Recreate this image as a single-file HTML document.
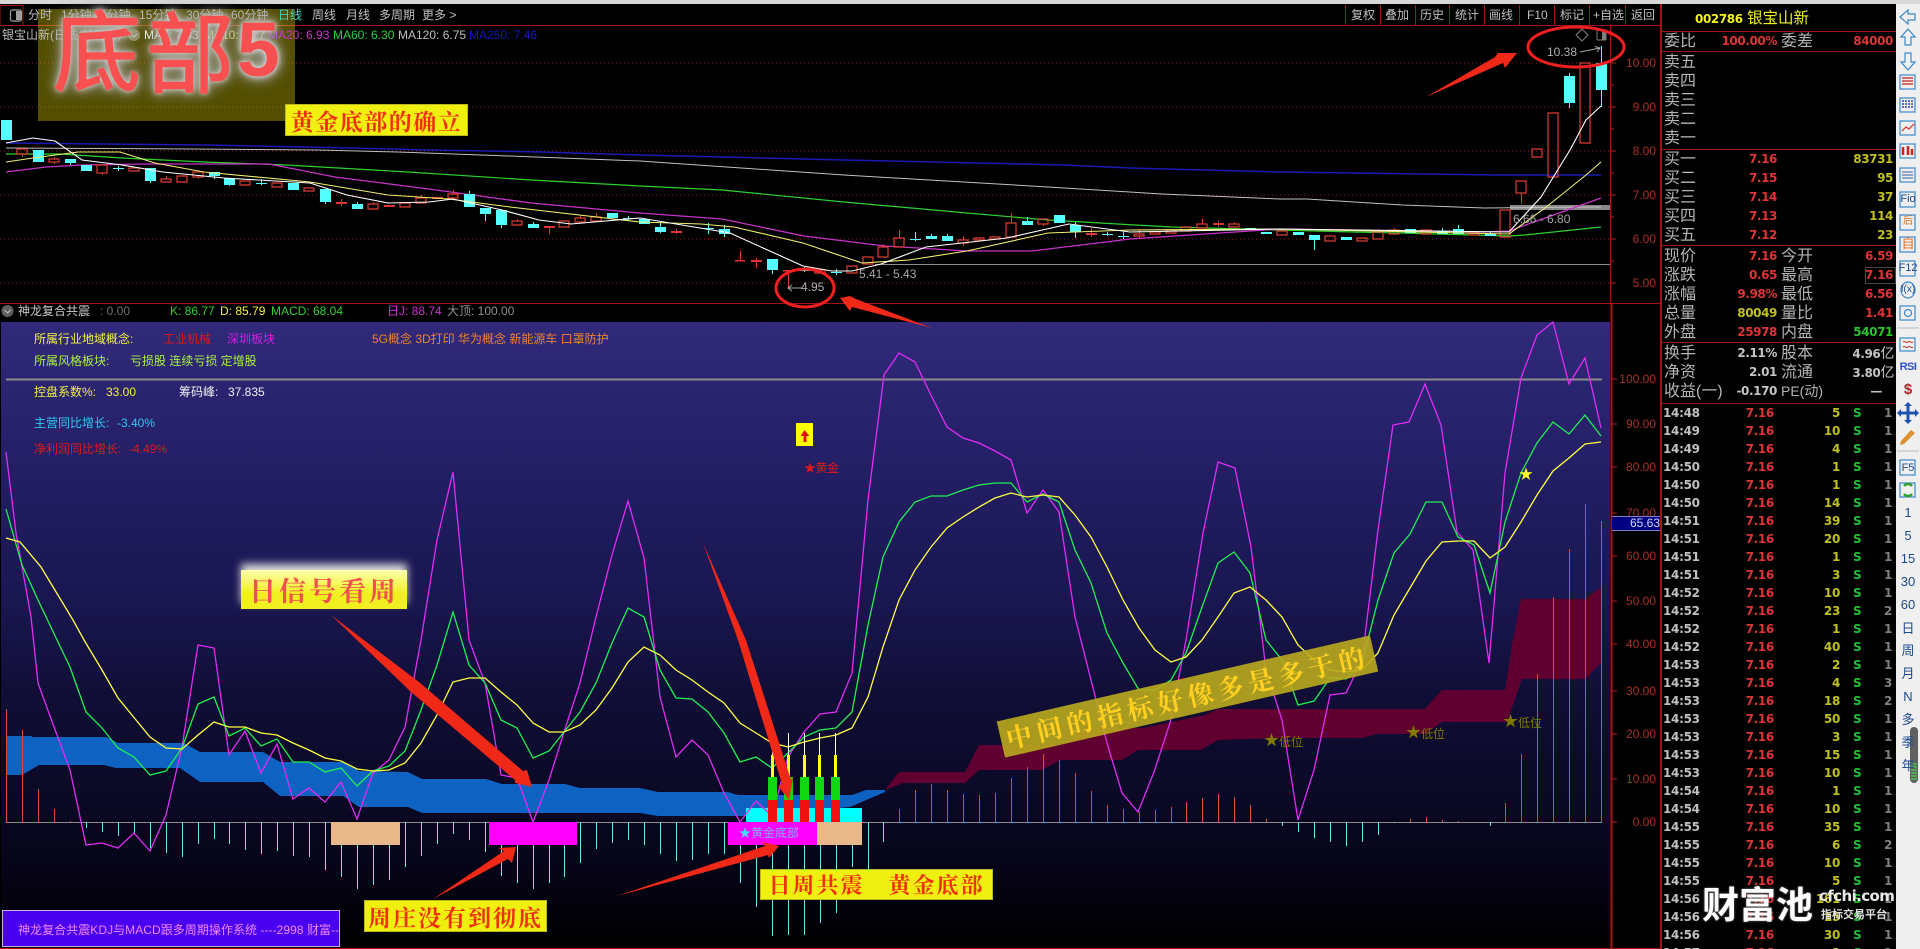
<!DOCTYPE html>
<html><head><meta charset="utf-8"><style>
html,body{margin:0;padding:0;background:#000;}
#p{position:relative;width:1920px;height:949px;overflow:hidden;background:#000;font-family:"Liberation Sans","Noto Sans CJK SC",sans-serif;font-size:12px;color:#c0c0c0;}
#p div,#p span{white-space:nowrap;}
.t{position:absolute;line-height:14px;height:14px;}
.box{position:absolute;}
.lab{position:absolute;display:flex;align-items:center;justify-content:center;background:#f0f010;color:#f03010;font-family:"Noto Serif CJK SC",serif;font-weight:700;box-sizing:border-box;border:1px solid #b8b820;}
svg{position:absolute;left:0;top:0;}
#rp{position:absolute;left:1662px;top:0;width:234px;height:949px;}
.r{position:absolute;left:0;width:234px;height:19px;line-height:19px;font-family:"DejaVu Sans",sans-serif;font-weight:700;font-size:12px;letter-spacing:-.4px;}
.r i{font-style:normal;position:absolute;top:0;}
.a,.c{font-family:"Liberation Sans","Noto Sans CJK SC",sans-serif;font-weight:400;font-size:16px;letter-spacing:0;color:#b4b4b4;}
.a{left:2px}.c{left:119px}.b{right:119px}.d{right:3px}
.R{color:#e03434}.Y{color:#c0c020}.G{color:#28c428}.W{color:#c4c4c4}
.k{position:absolute;left:0;width:234px;height:18px;line-height:18px;font-family:"DejaVu Sans",sans-serif;font-weight:700;font-size:12px;letter-spacing:-.3px;}
.k i{font-style:normal;position:absolute;top:0;}
.k .m{left:1px;color:#c0c0c0;}.k .n{right:122px;color:#e03434;}.k .o{right:56px;color:#c0c020;}.k .s{left:191px;color:#20c030;}.k .u{left:222px;color:#808080;}
.ax{position:absolute;left:1612px;width:44px;text-align:right;color:#a83028;font-size:12px;line-height:14px;height:14px;}
.sb{position:absolute;left:1896px;width:24px;text-align:center;color:#1d4a8c;font-size:13px;line-height:16px;height:16px;}
</style></head><body><div id="p">

<!-- indicator background -->
<div class="box" style="left:1px;top:322px;width:1609px;height:626px;background:linear-gradient(to bottom,#312a7a 0,#241f66 22%,#191650 45%,#100e36 60%,#0b0926 75%,#060416 88%,#000 100%);"></div>

<svg width="1920" height="949" viewBox="0 0 1920 949">
<!-- top grid -->
<path d="M0 63H1610M0 107H1610M0 151H1610M0 195H1610M0 239H1610M0 283H1610" stroke="#8a2018" stroke-width="1" stroke-dasharray="1 3" fill="none"/>
<path d="M875 264.500H1610" stroke="#8c8c8c" stroke-width="1"/>
<rect x="1510" y="205" width="100" height="5" fill="#8a8a8a"/>

<!-- MA lines -->
<polyline fill="none" stroke="#1a1ab4" stroke-width="1.500" points="6,143 208,145 351,148 429,150 541,152 640,155 844,160 1064,165 1130,168 1280,172 1353,173 1496,175 1601,175"/>
<polyline fill="none" stroke="#c0c0c0" stroke-width="1" points="6,148 192,149 318,150 398,152 510,156 640,161 844,175 1048,187 1162,194 1280,199 1307,199 1402,205 1484,208 1601,207"/>
<polyline fill="none" stroke="#2ed12e" stroke-width="1.200" points="6,154 61,154 122,158 204,162 286,165 408,172 531,180 640,186 722,190 844,202 967,213 1048,220 1171,227 1280,230 1353,232 1402,233 1509,236 1525,235 1601,227"/>
<polyline fill="none" stroke="#c832c8" stroke-width="1.300" points="6,172 46,167 82,165 143,164 269,164 335,177 429,189 531,203 640,213 722,219 804,236 885,246 967,251 1032,251 1130,239 1280,229 1484,232 1509,231 1545,218 1601,198"/>

<!-- candles -->
<path fill="#55ffff" d="M1 120h11v20H1zM33 150h11v12H33zM65 159h11v4H65zM81 165h11v6H81zM145 168h11v13h-11zM209 172h11v4h-11zM224 178h11v7h-11zM288 183h11v7h-11zM320 189h11v13h-11zM352 204h11v5h-11zM464 194h11v13h-11zM480 208h11v6h-11zM496 210h11v15h-11zM528 224h11v4h-11zM607 213h11v5h-11zM639 219h11v5h-11zM655 227h11v5h-11zM719 229h11v5h-11zM767 259h11v11h-11zM926 236h11v3h-11zM942 236h11v5h-11zM1022 221h11v4h-11zM1054 215h11v8h-11zM1070 225h11v7h-11zM1245 228h11v2h-11zM1261 232h11v2h-11zM1293 232h11v3h-11zM1309 235h11v5h-11zM1341 237h11v3h-11zM1405 229h11v4h-11zM1437 231h11v3h-11zM1453 229h11v5h-11zM1485 234h11v2h-11zM1564 76h11v27h-11zM1596 63h11v27h-11z"/>
<path fill="none" stroke="#55ffff" stroke-width="1" d="M70.500 159v6M150.500 181v2M214.500 172v7M229.500 185v1M325.500 202v2M357.500 202v2M469.500 191v3M485.500 214v7M501.500 225v3M533.500 222v2M660.500 223v10M724.500 225v12M772.500 270v4M931.500 234v5M947.500 234v3M1027.500 217v4M1075.500 222v16M1314.500 240v10M1442.500 228v3M1458.500 225v4M1490.500 231v3M1569.500 73v3M1569.500 103v5M1601.500 46v17M1601.500 90v17M113 168.500h11M118.500 166v5M256 183.500h11M261.500 179v6M623 218.500h11M628.500 216v5M703 228.500h11M708.500 223v11M799 270.500h11M804.500 267v5M831 272.500h11M836.500 269v6M910 239.500h11M915.500 232v9M1102 234.500h11M1107.500 232v4M1118 236.500h11M1123.500 232v7"/>
<path fill="none" stroke="#dc3c32" stroke-width="1.200" d="M17 149h10v5H17zM49 159h10v3H49zM97 165h10v8H97zM129 168h10v3h-10zM161 179h10v3h-10zM177 176h10v6h-10zM193 172h10v5h-10zM240 181h10v4h-10zM272 183h10v4h-10zM304 188h10v3h-10zM368 204h10v5h-10zM400 203h10v4h-10zM416 198h10v5h-10zM448 194h10v4h-10zM512 221h10v4h-10zM559 221h10v6h-10zM575 218h10v4h-10zM591 217h10v4h-10zM815 270h10v3h-10zM847 266h10v7h-10zM863 257h10v7h-10zM878 247h10v10h-10zM894 238h10v9h-10zM958 240h10v3h-10zM974 238h10v2h-10zM990 237h10v2h-10zM1006 223h10v14h-10zM1038 219h10v5h-10zM1134 234h10v2h-10zM1150 232h10v2h-10zM1166 230h10v3h-10zM1181 227h10v4h-10zM1197 224h10v4h-10zM1229 224h10v3h-10zM1277 231h10v4h-10zM1325 236h10v5h-10zM1357 238h10v3h-10zM1373 232h10v7h-10zM1389 230h10v4h-10zM1421 230h10v4h-10zM1469 233h10v2h-10zM1500 210h10v27h-10zM1516 181h10v12h-10zM1532 149h10v8h-10zM1548 113h10v64h-10zM1580 63h10v80h-10z"/>
<path fill="#e03434" d="M336 202h11v2h-11zM384 205h11v2h-11zM432 197h11v2h-11zM544 226h11v2h-11zM671 231h11v2h-11zM751 260h11v2h-11zM1086 233h11v2h-11zM1213 223h11v2h-11zM735 260h10v1.500h-10zM783 270h10v1.500h-10z"/>
<path fill="none" stroke="#dc3c32" stroke-width="1" d="M22.500 147v2M22.500 154v3M54.500 157v2M54.500 162v2M102.500 173v2M166.500 176v3M198.500 177v2M373.500 202v2M421.500 195v3M453.500 190v4M517.500 219v2M580.500 216v2M596.500 213v4M883.500 244v3M899.500 230v8M963.500 236v4M963.500 243v3M1011.500 213v10M1043.500 224v2M1139.500 230v4M1139.500 236v3M1202.500 219v5M1234.500 222v2M1378.500 229v3M1394.500 228v2M1521.500 193v11M341.500 199v7M549.500 228v6M676.500 229v5M756.500 258v10M1091.500 228v9M1218.500 221v6M740.500 251v10M788.500 270v19"/>
<!-- yellow/white MA over candles -->
<polyline fill="none" stroke="#f0f070" stroke-width="1.100" points="6,162 33,158 78,152 120,152 155,163 204,172 310,182 388,195 449,199 510,207 640,222 701,224 734,227 803,243 862,263 909,260 967,251 1048,233 1130,230 1280,229 1509,234 1545,208 1586,175 1601,162"/>
<polyline fill="none" stroke="#ffffff" stroke-width="1.100" points="6,143 33,138 55,141 82,160 122,165 163,172 224,178 310,183 347,195 388,203 429,202 453,199 502,210 539,220 571,224 640,218 730,233 803,266 832,271 852,271 881,264 926,247 1007,238 1069,224 1130,232 1280,229 1509,232 1541,197 1570,150 1586,120 1601,106"/>

<!-- markers top -->
<path d="M1582 29l6 6-6 6-6-6z" fill="none" stroke="#808080"/>
<rect x="1597" y="30" width="9" height="10" rx="1" fill="none" stroke="#808080"/>
<rect x="1602" y="30" width="4" height="10" fill="#808080"/>
<path d="M1580 52l20-4M1595 46.500l5 1.500-3 4" fill="none" stroke="#a8a8a8"/>
<path d="M802 288h-14M792 285l-4 3 4 3" fill="none" stroke="#a8a8a8"/>

<!-- axes lines -->
<path d="M0 25.500H1661M0 303.500H1661M0 948.500H1661" stroke="#a01414" stroke-width="1"/>
<path d="M1610.500 25V303" stroke="#a01414" stroke-width="1"/>
<path d="M1611.500 303V949" stroke="#b01010" stroke-width="2"/>
<path d="M1661 0V949" stroke="#b01010" stroke-width="2"/>
<path d="M0 5.500h23v20H0zM23 5v20" fill="none" stroke="#a01414"/>
<path d="M1345.500 5v20M1380.500 5v20M1415.500 5v20M1449.500 5v20M1484.500 5v20M1519.500 5v20M1554.500 5v20M1589.500 5v20M1625.500 5v20" stroke="#a01414"/>
<path d="M1611 63h5M1611 85h3M1611 107h5M1611 129h3M1611 151h5M1611 173h3M1611 195h5M1611 217h3M1611 239h5M1611 261h3M1611 283h5M1612 379h5M1612 424h5M1612 467h5M1612 513h5M1612 556h5M1612 601h5M1612 644h5M1612 691h5M1612 734h5M1612 779h5M1612 822h5" stroke="#b02020"/>
<path d="M1662 31.500h234M1662 51.500h234M1662 149.500h234M1662 245.500h234M1662 342.500h234M1662 403.500h234" stroke="#a01414"/>
<rect x="12" y="10" width="11" height="11" rx="2" fill="none" stroke="#a0a0a0" stroke-width="1.200" transform="translate(-1.500,0)"/>
<rect x="16" y="11" width="5" height="9" fill="#a0a0a0"/>
<circle cx="134" cy="35" r="6" fill="#606060"/><path d="M131 34l3 3 3-3" fill="none" stroke="#c0c0c0"/>
<circle cx="7.500" cy="311" r="6" fill="#606060"/><path d="M4.500 310l3 3 3-3" fill="none" stroke="#c0c0c0"/>
<path d="M1865.500 267.500h30v16h-30z" fill="none" stroke="#484848"/>

<!-- indicator lines -->
<path d="M6 379.500H1602" stroke="#8c8c8c" stroke-width="2"/>
<polygon fill="#0d62c2" points="6,736 31,736 33,737 106,737 118,743 184,743 200,752 263,752 280,762 343,762 359,771 408,772 422,779 486,779 502,784 565,784 580,788 640,788 658,792 728,792 738,795 852,795 866,790 885,790 885,792 850,807 745,816 658,816 640,813 422,813 408,807 359,807 343,796 280,796 263,782 200,782 180,768 116,768 104,765 39,765 22,775 6,775"/>
<polygon fill="#600030" points="885,790 899,772 965,772 979,745 1060,745 1085,728 1143,728 1205,715 1218,709 1425,709 1442,690 1505,690 1513,640 1521,599 1585,599 1601,587 1601,663 1585,679 1522,679 1507,722 1442,722 1425,734 1377,734 1362,738 1280,738 1218,740 1201,750 1138,750 1122,760 1060,760 1042,770 979,770 965,783 903,783"/>
<path d="M6 822.500H1602" stroke="#8c8c8c" stroke-width="1"/>
<!-- hist cyan -->
<path fill="none" stroke="#6fe6ea" stroke-width="1" d="M86.500 822V828M102.500 822V832M118.500 822V836M134.500 822V833M150.500 822V848M166.500 822V853M182.500 822V857M198.500 822V844M214.500 822V839M229.500 822V844M245.500 822V850M261.500 822V854M277.500 822V851M293.500 822V856M309.500 822V857M325.500 822V870M341.500 822V877M357.500 822V889M373.500 822V885M389.500 822V880M405.500 822V867M421.500 822V856M437.500 822V844M453.500 822V834M469.500 822V840M485.500 822V852M501.500 822V876M517.500 822V883M533.500 822V889M549.500 822V883M564.500 822V877M580.500 822V863M596.500 822V849M612.500 822V843M628.500 822V840M644.500 822V845M660.500 822V854M676.500 822V861M692.500 822V860M708.500 822V854M724.500 822V854M740.500 822V883M756.500 822V907M772.500 822V936M788.500 822V935M804.500 822V935M820.500 822V923M836.500 822V913M852.500 822V867M868.500 822V870M883.500 822V842M1282.500 822V826M1298.500 822V832M1314.500 822V838M1330.500 822V842M1346.500 822V846M1362.500 822V842M1378.500 822V835M1394.500 822V823M1490.500 822V826"/>
<path fill="none" stroke="#e04838" stroke-width="1" d="M6.500 822V709M22.500 822V730M38.500 822V789M54.500 822V809M70.500 822V821M899.500 822V809M915.500 822V790M931.500 822V784M947.500 822V790M963.500 822V794M979.500 822V795M995.500 822V793M1011.500 822V778M1027.500 822V767M1043.500 822V754M1059.500 822V760M1075.500 822V773M1091.500 822V791M1107.500 822V805M1123.500 822V809M1139.500 822V812M1155.500 822V810M1171.500 822V807M1186.500 822V802M1202.500 822V798M1218.500 822V794M1234.500 822V797M1250.500 822V805M1266.500 822V819M1410.500 822V819M1426.500 822V817M1442.500 822V820M1458.500 822V821M1505.500 822V803M1521.500 822V754M1537.500 822V674M1553.500 822V597M1569.500 822V549M1585.500 822V504M1601.500 822V521"/>
<!-- boxes -->
<rect x="331" y="822" width="69" height="23" fill="#e8b88a"/>
<rect x="489" y="822" width="88" height="23" fill="#ff00ff"/>
<rect x="746" y="808" width="116" height="14" fill="#00ffff"/>
<rect x="728" y="822" width="89" height="23" fill="#ff00ff"/>
<rect x="817" y="822" width="45" height="23" fill="#e8b88a"/>
<!-- KDJ -->
<polyline fill="none" stroke="#e02cf4" stroke-width="1.300" points="6,452 16,533 31,617 38,683 54,727 70,770 86,845 102,843 118,848 134,833 150,851 166,815 182,747 198,645 214,648 229,755 245,731 261,773 277,744 293,799 309,788 325,802 341,782 357,819 373,773 389,760 405,727 421,640 437,540 453,472 469,640 485,683 501,775 517,778 533,822 549,780 564,732 580,683 596,617 612,555 628,501 644,558 660,697 676,757 692,740 708,755 724,793 740,822 756,801 772,816 788,757 804,732 820,714 836,712 852,673 868,500 884,375 899,353 915,362 931,395 947,427 963,438 979,443 995,451 1011,460 1027,513 1043,490 1059,512 1075,617 1091,680 1107,743 1122,793 1138,812 1154,772 1170,723 1186,640 1203,533 1218,462 1235,468 1251,547 1266,670 1282,720 1298,820 1314,770 1330,695 1346,693 1362,660 1378,530 1393,425 1409,422 1425,384 1441,425 1457,532 1473,550 1489,663 1505,473 1521,378 1537,335 1553,322 1569,384 1585,358 1601,428"/>
<polyline fill="none" stroke="#20f050" stroke-width="1.300" points="6,509 22,565 38,600 57,640 70,667 86,712 102,728 118,748 134,757 150,775 166,771 182,748 198,704 214,697 229,736 245,728 261,746 277,739 293,762 309,762 325,772 341,768 357,786 373,771 389,766 405,751 421,710 437,665 453,612 469,665 485,683 501,720 517,728 533,758 549,751 564,732 580,712 596,683 612,643 628,608 644,617 660,670 676,698 692,699 708,712 724,733 740,762 756,757 772,768 788,753 804,737 820,730 836,728 852,712 868,625 883,557 899,522 915,502 931,496 947,496 963,490 979,485 995,483 1011,483 1027,502 1043,494 1059,502 1075,550 1091,583 1107,633 1123,663 1139,690 1155,690 1171,680 1186,653 1202,607 1218,563 1234,552 1250,573 1266,640 1282,660 1298,705 1314,701 1330,678 1346,679 1362,663 1378,600 1394,553 1410,534 1426,502 1442,502 1458,537 1474,545 1490,593 1505,522 1521,473 1537,443 1553,422 1569,434 1585,415 1601,436"/>
<polyline fill="none" stroke="#ffff40" stroke-width="1.300" points="6,538 20,542 41,567 73,620 84,640 102,670 118,698 150,737 166,748 182,749 198,735 214,722 229,727 245,727 261,733 277,735 293,743 309,750 325,758 341,761 357,769 373,771 389,770 405,763 421,743 437,715 453,682 469,678 485,678 501,692 517,705 533,723 549,732 564,732 580,725 596,710 612,688 628,662 644,647 660,655 676,670 692,680 708,692 724,703 740,723 756,733 772,743 788,747 804,742 820,738 836,735 852,728 868,697 883,647 899,600 915,570 931,547 947,528 963,517 979,507 995,498 1011,493 1027,497 1043,495 1059,497 1075,515 1091,537 1107,567 1123,600 1139,628 1155,650 1171,662 1186,657 1202,640 1218,617 1234,593 1250,587 1266,600 1282,617 1298,645 1314,660 1330,670 1346,672 1362,670 1378,653 1394,615 1410,588 1426,561 1442,542 1458,541 1474,541 1490,558 1505,547 1521,522 1537,495 1553,471 1569,458 1585,444 1601,442"/>
<!-- pillars -->
<path fill="none" stroke="#ffffff" stroke-width="1" d="M772.500 733V755M788.500 733V755M804.500 733V755M819.500 733V755M835.500 733V755"/>
<path fill="none" stroke="#ffff10" stroke-width="3" d="M772.500 755V777M788.500 755V777M804.500 755V777M819.500 755V777M835.500 755V777"/>
<path fill="#10d810" d="M768 777h9v23h-9zM784 777h9v23h-9zM800 777h9v23h-9zM815 777h9v23h-9zM831 777h9v23h-9z"/>
<path fill="#f01010" d="M768 800h9v22h-9zM784 800h9v22h-9zM800 800h9v22h-9zM815 800h9v22h-9zM831 800h9v22h-9z"/>
<!-- yellow arrow -->
<rect x="796" y="423" width="17" height="23" fill="#ffff00"/>
<path d="M804.500 430l5 6h-3v6h-3v-6h-3z" fill="#e01010"/>
</svg>

<!-- olive watermark backing: chart lines remain visible through it -->
<div class="box" style="left:38px;top:9px;width:257px;height:112px;background:#544e00;mix-blend-mode:screen"></div>

<!-- toolbar -->
<div class="t" style="left:28px;top:8px">分时</div><div class="t" style="left:61px;top:8px">1分钟</div><div class="t" style="left:100px;top:8px">5分钟</div><div class="t" style="left:139px;top:8px">15分钟</div><div class="t" style="left:186px;top:8px">30分钟</div><div class="t" style="left:231px;top:8px">60分钟</div><div class="t" style="left:278px;top:8px;color:#40d8c8">日线</div><div class="t" style="left:312px;top:8px">周线</div><div class="t" style="left:346px;top:8px">月线</div><div class="t" style="left:379px;top:8px">多周期</div><div class="t" style="left:422px;top:8px">更多 &gt;</div>
<div class="t" style="left:1351px;top:8px">复权</div><div class="t" style="left:1385px;top:8px">叠加</div><div class="t" style="left:1420px;top:8px">历史</div><div class="t" style="left:1455px;top:8px">统计</div><div class="t" style="left:1489px;top:8px">画线</div><div class="t" style="left:1527px;top:8px">F10</div><div class="t" style="left:1560px;top:8px">标记</div><div class="t" style="left:1593px;top:8px">+自选</div><div class="t" style="left:1631px;top:8px">返回</div>
<!-- MA row -->
<div class="t" style="left:2px;top:28px">银宝山新(日线/前复权)</div>
<div class="t" style="left:144px;top:28px;color:#fff">MA5: 7.83</div><div class="t" style="left:204px;top:28px;color:#f0f070">MA10: 7.77</div><div class="t" style="left:268px;top:28px;color:#d030d0">MA20: 6.93</div><div class="t" style="left:333px;top:28px;color:#30d040">MA60: 6.30</div><div class="t" style="left:398px;top:28px;color:#c0c0c0">MA120: 6.75</div><div class="t" style="left:469px;top:28px;color:#1818b8">MA250: 7.46</div>
<!-- price texts -->
<div class="t" style="left:1547px;top:45px;color:#b0b0b0">10.38</div>
<div class="t" style="left:1513px;top:212px;color:#a8a8a8">6.66 - 6.80</div>
<div class="t" style="left:859px;top:267px;color:#a8a8a8">5.41 - 5.43</div>
<div class="t" style="left:801px;top:280px;color:#b0b0b0">4.95</div>
<!-- indicator header -->
<div class="t" style="left:18px;top:304px;color:#c8c8c8">神龙复合共震</div><div class="t" style="left:100px;top:304px;color:#707070">: 0.00</div><div class="t" style="left:170px;top:304px;color:#30d030">K: 86.77</div><div class="t" style="left:220px;top:304px;color:#f0f040">D: 85.79</div><div class="t" style="left:271px;top:304px;color:#30d030">MACD: 68.04</div><div class="t" style="left:387px;top:304px;color:#d030d0">日J: 88.74</div><div class="t" style="left:447px;top:304px;color:#909090">大顶: 100.00</div>
<!-- axis -->
<div class="ax" style="top:56px">10.00</div><div class="ax" style="top:100px">9.00</div><div class="ax" style="top:144px">8.00</div><div class="ax" style="top:188px">7.00</div><div class="ax" style="top:232px">6.00</div><div class="ax" style="top:276px">5.00</div>
<div class="ax" style="top:372px">100.00</div><div class="ax" style="top:417px">90.00</div><div class="ax" style="top:460px">80.00</div><div class="ax" style="top:506px">70.00</div><div class="ax" style="top:549px">60.00</div><div class="ax" style="top:594px">50.00</div><div class="ax" style="top:637px">40.00</div><div class="ax" style="top:684px">30.00</div><div class="ax" style="top:727px">20.00</div><div class="ax" style="top:772px">10.00</div><div class="ax" style="top:815px">0.00</div>
<div class="box" style="left:1612px;top:516px;width:48px;height:15px;background:#000080;border-top:1px solid #8080c0;border-bottom:1px solid #8080c0;box-sizing:border-box;color:#d0d8ff;line-height:13px;text-align:right;overflow:hidden">65.63</div>

<!-- panel texts -->
<div class="t" style="left:34px;top:332px;color:#f0f040">所属行业地域概念:</div><div class="t" style="left:163px;top:332px;color:#e01818">工业机械</div><div class="t" style="left:227px;top:332px;color:#d020e0">深圳板块</div><div class="t" style="left:372px;top:332px;color:#f08030">5G概念 3D打印 华为概念 新能源车 口罩防护</div>
<div class="t" style="left:34px;top:354px;color:#a8f040">所属风格板块:</div><div class="t" style="left:130px;top:354px;color:#a8f040">亏损股 连续亏损 定增股</div>
<div class="t" style="left:34px;top:385px;color:#f0f040">控盘系数%:</div><div class="t" style="left:106px;top:385px;color:#f0f040">33.00</div><div class="t" style="left:179px;top:385px;color:#f0f0f0">筹码峰:</div><div class="t" style="left:228px;top:385px;color:#f0f0f0">37.835</div>
<div class="t" style="left:34px;top:416px;color:#30c8f0">主营同比增长:</div><div class="t" style="left:117px;top:416px;color:#30c8f0">-3.40%</div>
<div class="t" style="left:34px;top:442px;color:#e01818">净利润同比增长:</div><div class="t" style="left:129px;top:442px;color:#e01818">-4.49%</div>
<div class="t" style="left:804px;top:461px;color:#e01818;letter-spacing:-.5px">★黄金</div>
<div class="t" style="left:739px;top:826px;color:#80b0ff"><span style="color:#40e0ff">★</span>黄金底部</div>
<div class="t" style="left:1264px;top:734px;color:#807800;font-size:15px">★</div><div class="t" style="left:1279px;top:735px;color:#807800">低位</div>
<div class="t" style="left:1406px;top:726px;color:#807800;font-size:15px">★</div><div class="t" style="left:1421px;top:727px;color:#807800">低位</div>
<div class="t" style="left:1503px;top:715px;color:#807800;font-size:15px">★</div><div class="t" style="left:1518px;top:716px;color:#807800">低位</div>
<div class="t" style="left:1519px;top:467px;color:#ffff20;font-size:14px">★</div>

<!-- purple box -->
<div class="box" style="left:2px;top:910px;width:338px;height:37px;background:#4a00f0;border:1px solid #c8b0e0;box-sizing:border-box"></div>
<div class="t" style="left:18px;top:923px;color:#f088f0;letter-spacing:.05px">神龙复合共震KDJ与MACD跟多周期操作系统 ----2998 财富--</div>

<!-- Right panel -->
<div id="rp">
<div class="t" style="left:33px;top:10px;height:18px;line-height:18px;color:#f0f020;font-family:'DejaVu Sans',sans-serif;font-weight:700;font-size:12px;letter-spacing:-.4px">002786</div>
<div class="t" style="left:85px;top:10px;height:18px;line-height:18px;color:#f0f020;font-size:15.500px">银宝山新</div>
<div class="r" style="top:32px"><i class="a">委比</i><i class="b R">100.00%</i><i class="c">委差</i><i class="d R">84000</i></div>
<div class="r" style="top:53px"><i class="a">卖五</i></div>
<div class="r" style="top:72px"><i class="a">卖四</i></div>
<div class="r" style="top:91px"><i class="a">卖三</i></div>
<div class="r" style="top:110px"><i class="a">卖二</i></div>
<div class="r" style="top:129px"><i class="a">卖一</i></div>
<div class="r" style="top:150px"><i class="a">买一</i><i class="b R">7.16</i><i class="d Y">83731</i></div>
<div class="r" style="top:169px"><i class="a">买二</i><i class="b R">7.15</i><i class="d Y">95</i></div>
<div class="r" style="top:188px"><i class="a">买三</i><i class="b R">7.14</i><i class="d Y">37</i></div>
<div class="r" style="top:207px"><i class="a">买四</i><i class="b R">7.13</i><i class="d Y">114</i></div>
<div class="r" style="top:226px"><i class="a">买五</i><i class="b R">7.12</i><i class="d Y">23</i></div>
<div class="r" style="top:247px"><i class="a">现价</i><i class="b R">7.16</i><i class="c">今开</i><i class="d R">6.59</i></div>
<div class="r" style="top:266px"><i class="a">涨跌</i><i class="b R">0.65</i><i class="c">最高</i><i class="d R">7.16</i></div>
<div class="r" style="top:285px"><i class="a">涨幅</i><i class="b R">9.98%</i><i class="c">最低</i><i class="d R">6.56</i></div>
<div class="r" style="top:304px"><i class="a">总量</i><i class="b Y">80049</i><i class="c">量比</i><i class="d R">1.41</i></div>
<div class="r" style="top:323px"><i class="a">外盘</i><i class="b R">25978</i><i class="c">内盘</i><i class="d G">54071</i></div>
<div class="r" style="top:344px"><i class="a">换手</i><i class="b W">2.11%</i><i class="c">股本</i><i class="d W" style="right:2px">4.96<span style="font-family:'Noto Sans CJK SC';font-weight:400;font-size:14px">亿</span></i></div>
<div class="r" style="top:363px"><i class="a">净资</i><i class="b W">2.01</i><i class="c">流通</i><i class="d W" style="right:2px">3.80<span style="font-family:'Noto Sans CJK SC';font-weight:400;font-size:14px">亿</span></i></div>
<div class="r" style="top:382px"><i class="a">收益(一)</i><i class="b W">-0.170</i><i class="c" style="font-size:14px">PE(动)</i><i class="d W" style="right:14px">—</i></div>

<div class="k" style="top:404px"><i class="m">14:48</i><i class="n">7.16</i><i class="o">5</i><i class="s">S</i><i class="u">1</i></div>
<div class="k" style="top:422px"><i class="m">14:49</i><i class="n">7.16</i><i class="o">10</i><i class="s">S</i><i class="u">1</i></div>
<div class="k" style="top:440px"><i class="m">14:49</i><i class="n">7.16</i><i class="o">4</i><i class="s">S</i><i class="u">1</i></div>
<div class="k" style="top:458px"><i class="m">14:50</i><i class="n">7.16</i><i class="o">1</i><i class="s">S</i><i class="u">1</i></div>
<div class="k" style="top:476px"><i class="m">14:50</i><i class="n">7.16</i><i class="o">1</i><i class="s">S</i><i class="u">1</i></div>
<div class="k" style="top:494px"><i class="m">14:50</i><i class="n">7.16</i><i class="o">14</i><i class="s">S</i><i class="u">1</i></div>
<div class="k" style="top:512px"><i class="m">14:51</i><i class="n">7.16</i><i class="o">39</i><i class="s">S</i><i class="u">1</i></div>
<div class="k" style="top:530px"><i class="m">14:51</i><i class="n">7.16</i><i class="o">20</i><i class="s">S</i><i class="u">1</i></div>
<div class="k" style="top:548px"><i class="m">14:51</i><i class="n">7.16</i><i class="o">1</i><i class="s">S</i><i class="u">1</i></div>
<div class="k" style="top:566px"><i class="m">14:51</i><i class="n">7.16</i><i class="o">3</i><i class="s">S</i><i class="u">1</i></div>
<div class="k" style="top:584px"><i class="m">14:52</i><i class="n">7.16</i><i class="o">10</i><i class="s">S</i><i class="u">1</i></div>
<div class="k" style="top:602px"><i class="m">14:52</i><i class="n">7.16</i><i class="o">23</i><i class="s">S</i><i class="u">2</i></div>
<div class="k" style="top:620px"><i class="m">14:52</i><i class="n">7.16</i><i class="o">1</i><i class="s">S</i><i class="u">1</i></div>
<div class="k" style="top:638px"><i class="m">14:52</i><i class="n">7.16</i><i class="o">40</i><i class="s">S</i><i class="u">1</i></div>
<div class="k" style="top:656px"><i class="m">14:53</i><i class="n">7.16</i><i class="o">2</i><i class="s">S</i><i class="u">1</i></div>
<div class="k" style="top:674px"><i class="m">14:53</i><i class="n">7.16</i><i class="o">4</i><i class="s">S</i><i class="u">3</i></div>
<div class="k" style="top:692px"><i class="m">14:53</i><i class="n">7.16</i><i class="o">18</i><i class="s">S</i><i class="u">2</i></div>
<div class="k" style="top:710px"><i class="m">14:53</i><i class="n">7.16</i><i class="o">50</i><i class="s">S</i><i class="u">1</i></div>
<div class="k" style="top:728px"><i class="m">14:53</i><i class="n">7.16</i><i class="o">3</i><i class="s">S</i><i class="u">1</i></div>
<div class="k" style="top:746px"><i class="m">14:53</i><i class="n">7.16</i><i class="o">15</i><i class="s">S</i><i class="u">1</i></div>
<div class="k" style="top:764px"><i class="m">14:53</i><i class="n">7.16</i><i class="o">10</i><i class="s">S</i><i class="u">1</i></div>
<div class="k" style="top:782px"><i class="m">14:54</i><i class="n">7.16</i><i class="o">1</i><i class="s">S</i><i class="u">1</i></div>
<div class="k" style="top:800px"><i class="m">14:54</i><i class="n">7.16</i><i class="o">10</i><i class="s">S</i><i class="u">1</i></div>
<div class="k" style="top:818px"><i class="m">14:55</i><i class="n">7.16</i><i class="o">35</i><i class="s">S</i><i class="u">1</i></div>
<div class="k" style="top:836px"><i class="m">14:55</i><i class="n">7.16</i><i class="o">6</i><i class="s">S</i><i class="u">2</i></div>
<div class="k" style="top:854px"><i class="m">14:55</i><i class="n">7.16</i><i class="o">10</i><i class="s">S</i><i class="u">1</i></div>
<div class="k" style="top:872px"><i class="m">14:55</i><i class="n">7.16</i><i class="o">5</i><i class="s">S</i><i class="u">1</i></div>
<div class="k" style="top:890px"><i class="m">14:56</i><i class="n">7.16</i><i class="o">161</i><i class="s">S</i><i class="u">1</i></div>
<div class="k" style="top:908px"><i class="m">14:56</i><i class="n">7.16</i><i class="o">15</i><i class="s">S</i><i class="u">1</i></div>
<div class="k" style="top:926px"><i class="m">14:56</i><i class="n">7.16</i><i class="o">30</i><i class="s">S</i><i class="u">1</i></div>
<div class="k" style="top:944px"><i class="m">14:57</i><i class="n">7.16</i><i class="o">2</i><i class="s">S</i><i class="u">1</i></div>
</div>

<!-- sidebar -->
<div class="box" style="left:1896px;top:0;width:24px;height:949px;background:#efefef"></div>
<svg width="1920" height="949" viewBox="0 0 1920 949" style="pointer-events:none">
<g fill="none" stroke="#3a8ad0" stroke-width="1.200">
<path d="M1900 17l8-7v4h7v6h-7v4z"/>
<path d="M1908 29l7 8h-4v8h-6v-8h-4z"/>
<path d="M1905 53h6v9h4l-7 8-7-8h4z"/>
<rect x="1900" y="75" width="15" height="14"/><rect x="1900" y="98" width="15" height="14"/><rect x="1900" y="121" width="15" height="14"/><rect x="1900" y="144" width="15" height="14"/><rect x="1900" y="168" width="15" height="14" />
<rect x="1900" y="192" width="15" height="15"/><rect x="1900" y="215" width="15" height="15"/><rect x="1900" y="237" width="15" height="15"/><rect x="1900" y="261" width="15" height="15"/><ellipse cx="1908" cy="290" rx="7" ry="8"/><rect x="1900" y="306" width="15" height="14"/><circle cx="1908" cy="313" r="3.500"/>
<rect x="1900" y="338" width="15" height="13"/><rect x="1900" y="460" width="15" height="15"/><rect x="1900" y="483" width="15" height="14"/>
</g>
<path d="M1902 78h11M1902 81h11M1902 84h11" stroke="#d04040" stroke-width="1.500"/>
<path d="M1902 101h11M1902 104h11M1902 107h11" stroke="#3040c0" stroke-width="1.500" stroke-dasharray="2 1"/>
<path d="M1902 131l4-4 3 2 5-5" fill="none" stroke="#d04040" stroke-width="1.300"/>
<path d="M1903 147v8M1908 146v9M1912 149v6" stroke="#d02020" stroke-width="2.500"/>
<path d="M1902 172h11M1902 175h11M1902 178h11" stroke="#3060a0"/>
<path d="M1903 342c2-2 3 2 5 0s3 2 5 0M1903 347c2-2 3 2 5 0s3 2 5 0" fill="none" stroke="#c03030"/>
<path d="M1897 328h22M1897 451h22" stroke="#b8b8b8"/>
<path d="M1908 404v18M1899 413h18" stroke="#2050b0" stroke-width="3"/><path d="M1908 402l4 4h-8zM1908 424l4-4h-8zM1897 413l4-4v8zM1919 413l-4-4v8z" fill="#2050b0"/>
<path d="M1901 441l10-11 4 3-11 11-4 1z" fill="#e09030"/>
<path d="M1904 486a5 5 0 0 1 8 0M1912 494a5 5 0 0 1-8 0" fill="none" stroke="#30a030" stroke-width="2.500"/>
<rect x="1910" y="727" width="8" height="56" rx="4" fill="#606060"/><path d="M1911 764h6M1911 767h6M1911 770h6M1911 773h6M1911 776h6M1911 779h6" stroke="#50c050" stroke-width="1.500"/>
</svg>
<div class="sb" style="top:191px;font-size:11px;left:1896px">Fio</div><div class="sb" style="top:214px;color:#d07020;font-size:10px">后</div><div class="sb" style="top:236px;color:#e07020">自</div><div class="sb" style="top:260px;font-size:11px">F12</div><div class="sb" style="top:282px;font-size:10px">f(x)</div>
<div class="sb" style="top:359px;font-size:11px;font-weight:700;color:#3050c0;letter-spacing:-.5px">RSI</div><div class="sb" style="top:382px;font-size:15px;font-weight:700;color:#b02828">$</div>
<div class="sb" style="top:460px;font-size:11px">F5</div>
<div class="sb" style="top:505px">1</div><div class="sb" style="top:528px">5</div><div class="sb" style="top:551px">15</div><div class="sb" style="top:574px">30</div><div class="sb" style="top:597px">60</div><div class="sb" style="top:621px">日</div><div class="sb" style="top:643px">周</div><div class="sb" style="top:666px">月</div><div class="sb" style="top:689px">N</div><div class="sb" style="top:712px">多</div><div class="sb" style="top:735px">季</div><div class="sb" style="top:758px">年</div>

<!-- top bar -->
<div class="box" style="left:0;top:0;width:1920px;height:4px;background:#d8d8d8"></div>

<!-- watermark 底部5 -->
<div class="box" style="left:53px;top:1px;height:92px;line-height:92px;font-size:88px;color:#f85050;font-family:'Noto Sans CJK SC',sans-serif;-webkit-text-stroke:1.500px #f85050;text-shadow:0 0 5px #ddd,0 0 9px #ccc,0 0 14px #aaa,0 0 20px #888">底</div>
<div class="box" style="left:146px;top:3px;height:92px;line-height:92px;font-size:88px;color:#f85050;font-family:'Noto Sans CJK SC',sans-serif;-webkit-text-stroke:1.500px #f85050;text-shadow:0 0 5px #ddd,0 0 9px #ccc,0 0 14px #aaa,0 0 20px #888">部</div>
<div class="box" style="left:237px;top:4px;height:92px;line-height:92px;font-size:77px;font-weight:700;color:#f85050;font-family:'Liberation Sans',sans-serif;text-shadow:0 0 5px #ddd,0 0 9px #ccc,0 0 14px #aaa,0 0 20px #888">5</div>

<!-- labels -->
<div class="lab" style="left:285px;top:104px;width:183px;height:32px;font-size:23px;letter-spacing:1.500px">黄金底部的确立</div>
<div class="lab" style="left:241px;top:570px;width:166px;height:39px;font-size:27px;letter-spacing:3px;border:0;color:#f05050;box-shadow:0 -6px 8px #ddd;background:linear-gradient(#ffffb0,#f0f020 60%)">日信号看周</div>
<div class="lab" style="left:364px;top:900px;width:183px;height:32px;font-size:23px;letter-spacing:2px">周庄没有到彻底</div>
<div class="lab" style="left:760px;top:869px;width:233px;height:31px;font-size:22px;letter-spacing:2px">日周共震　黄金底部</div>
<div class="lab" style="left:996px;top:678px;width:383px;height:37px;background:rgba(186,170,30,.9);border:0;color:#ffd020;font-size:26px;letter-spacing:5px;transform:rotate(-13deg);">中间的指标好像多是多于的</div>

<!-- arrows and circles -->
<svg width="1920" height="949" viewBox="0 0 1920 949">
<g fill="#f02818">
<polygon points="1426,97 1495,57 1498,53 1517,53 1505,68 1503,63"/>
<polygon points="932,328 856,299 850,296 840,298 850,311 852,307"/>
<polygon points="331,615 419,682 523,771 527,770 532,787 515,783 515,780 411,692"/>
<polygon points="433,899 504,851 498,848 516,847 512,863 508,859"/>
<polygon points="617,896 765,846 762,842 779,846 769,858 768,855"/>
<polygon points="703,543 746,640 791,780 793,778 789,800 778,786 782,784 738,640"/>
</g>
<ellipse cx="1576" cy="47" rx="48" ry="20" fill="none" stroke="#f02020" stroke-width="3"/>
<ellipse cx="805" cy="288" rx="29" ry="19" fill="none" stroke="#f02020" stroke-width="3"/>
</svg>

<!-- site watermark -->
<div class="box" style="left:1702px;top:880px;height:44px;line-height:44px;font-size:37px;font-weight:700;color:#fff;font-family:'Noto Sans CJK SC',sans-serif;text-shadow:0 0 2px #888">财富池</div>
<div class="box" style="left:1819px;top:888px;height:17px;line-height:17px;font-size:15px;font-weight:700;color:#e8e8e8;font-family:'DejaVu Sans',sans-serif;letter-spacing:-.6px">cfchi.com</div>
<div class="box" style="left:1821px;top:907px;height:14px;line-height:14px;font-size:11px;font-weight:700;color:#e0e0e0;font-family:'Noto Sans CJK SC',sans-serif">指标交易平台</div>
</div></body></html>
